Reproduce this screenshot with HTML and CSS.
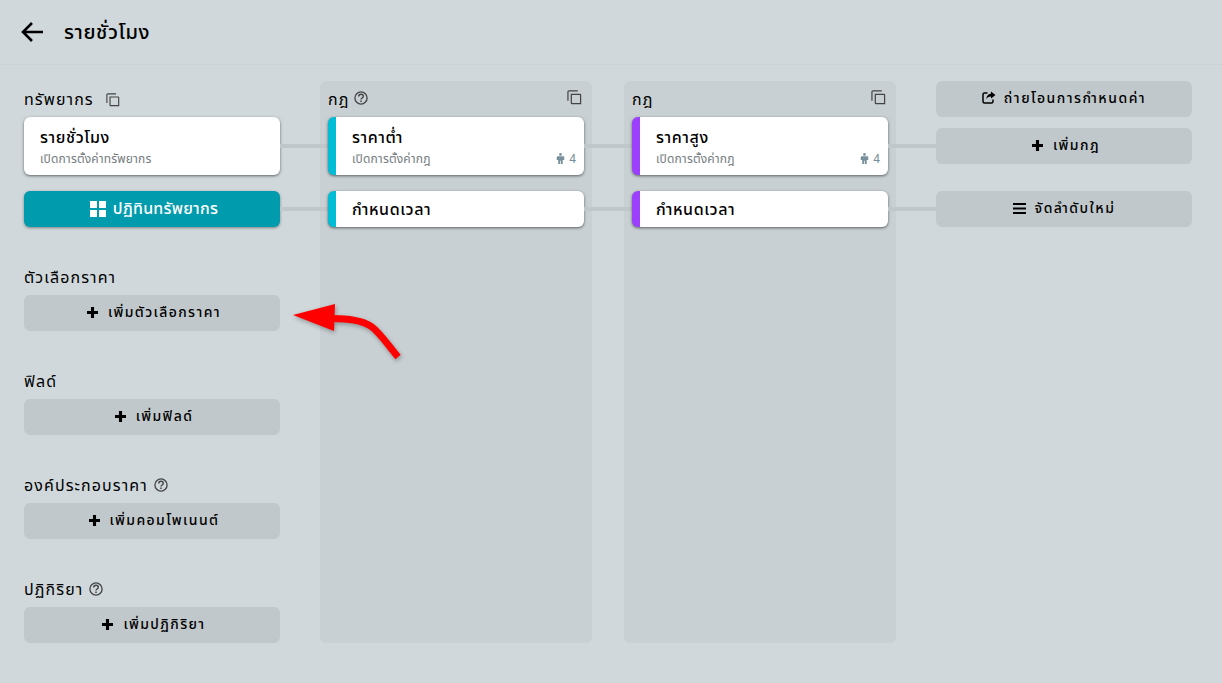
FILE: index.html
```html
<!DOCTYPE html>
<html lang="th">
<head>
<meta charset="utf-8">
<title>รายชั่วโมง</title>
<link rel="stylesheet" href="styles.css">
</head>
<body>
<svg class="defs" width="0" height="0" aria-hidden="true">
  <symbol id="copy" viewBox="0 0 16 16"><path d="M1 11.500V2.200C1 1.500 1.500 1 2.200 1h9.300M4.600 4.600h9.200c.4 0 .7.3.7.7v9.200H5.300c-.4 0-.7-.3-.7-.7z" fill="none" stroke="currentColor" stroke-width="1.300"/></symbol>
  <symbol id="help" viewBox="0 0 14 14"><circle cx="7" cy="7" r="6.100" fill="none" stroke="currentColor" stroke-width="1.300"/><path d="M4.700 5.500C4.800 4 5.800 3.300 7 3.300c1.300 0 2.300.8 2.300 2 0 1.700-2.300 1.600-2.300 3.300" fill="none" stroke="currentColor" stroke-width="1.400"/><rect x="6.250" y="9.500" width="1.500" height="1.500" fill="currentColor"/></symbol>
  <symbol id="plus" viewBox="0 0 12 12"><path d="M4.300 0h3.400v4.300H12v3.400H7.700V12H4.300V7.700H0V4.300h4.300z" fill="currentColor"/></symbol>
  <symbol id="person" viewBox="0 0 10 12"><circle cx="5" cy="1.500" r="1.500" fill="currentColor"/><path d="M2 3.400h6c.7 0 1.200.5 1.200 1.200v3H7.500V12H5.400V8.500h-.8V12H2.500V7.600H.8v-3c0-.7.5-1.200 1.200-1.200z" fill="currentColor"/></symbol>
</svg>

<header class="topbar">
  <svg class="back" viewBox="0 0 24 24" aria-hidden="true"><path d="M23 12H3M12 3l-9 9 9 9" fill="none" stroke="currentColor" stroke-width="2.600"/></svg>
  <h1>รายชั่วโมง</h1>
</header>

<main class="board">
  <section class="col">
    <div class="head"><h2>ทรัพยากร</h2><svg class="ico-copy small"><use href="#copy"/></svg></div>
    <div class="card res link">
      <div class="title">รายชั่วโมง</div>
      <div class="sub">เปิดการตั้งค่าทรัพยากร</div>
    </div>
    <button class="btn teal link">
      <svg class="grid-ico" viewBox="0 0 16 16" aria-hidden="true"><path d="M0 0h7v7H0zM9 0h7v7H9zM0 9h7v7H0zM9 9h7v7H9z" fill="currentColor"/></svg>
      ปฏิทินทรัพยากร
    </button>

    <div class="group">
      <div class="head"><h2>ตัวเลือกราคา</h2></div>
      <button class="btn"><svg class="ico-plus"><use href="#plus"/></svg>เพิ่มตัวเลือกราคา</button>
    </div>
    <div class="group">
      <div class="head"><h2>ฟิลด์</h2></div>
      <button class="btn"><svg class="ico-plus"><use href="#plus"/></svg>เพิ่มฟิลด์</button>
    </div>
    <div class="group">
      <div class="head"><h2>องค์ประกอบราคา</h2><svg class="ico-help"><use href="#help"/></svg></div>
      <button class="btn"><svg class="ico-plus"><use href="#plus"/></svg>เพิ่มคอมโพเนนต์</button>
    </div>
    <div class="group">
      <div class="head"><h2>ปฏิกิริยา</h2><svg class="ico-help"><use href="#help"/></svg></div>
      <button class="btn"><svg class="ico-plus"><use href="#plus"/></svg>เพิ่มปฏิกิริยา</button>
    </div>
  </section>

  <section class="panel">
    <div class="panel-head"><h2>กฎ</h2><svg class="ico-help"><use href="#help"/></svg><svg class="ico-copy"><use href="#copy"/></svg></div>
    <div class="card rule cyan link">
      <div class="title">ราคาต่ำ</div>
      <div class="meta"><span class="sub">เปิดการตั้งค่ากฎ</span><span class="count"><svg class="ico-person"><use href="#person"/></svg>4</span></div>
    </div>
    <div class="card rule short cyan link"><div class="title">กำหนดเวลา</div></div>
  </section>

  <section class="panel">
    <div class="panel-head"><h2>กฎ</h2><svg class="ico-copy"><use href="#copy"/></svg></div>
    <div class="card rule purple link">
      <div class="title">ราคาสูง</div>
      <div class="meta"><span class="sub">เปิดการตั้งค่ากฎ</span><span class="count"><svg class="ico-person"><use href="#person"/></svg>4</span></div>
    </div>
    <div class="card rule short purple link"><div class="title">กำหนดเวลา</div></div>
  </section>

  <section class="actions">
    <button class="btn">
      <svg class="ico-share" viewBox="0 0 14 14" aria-hidden="true"><path d="M5.500 2H2.500C1.700 2 1 2.700 1 3.500v7C1 11.300 1.700 12 2.500 12h7c.8 0 1.500-.7 1.500-1.500V8.500" fill="none" stroke="currentColor" stroke-width="1.500"/><path d="M9 .5 13.500 4 9 7.500V5.600C6.800 5.600 5.200 6.400 4.300 8.200 4.300 5.400 6 2.900 9 2.500z" fill="currentColor"/></svg>
      ถ่ายโอนการกำหนดค่า
    </button>
    <button class="btn add-rule"><svg class="ico-plus"><use href="#plus"/></svg>เพิ่มกฎ</button>
    <button class="btn reorder">
      <svg class="ico-menu" viewBox="0 0 13 11" aria-hidden="true"><path d="M0 0h13v2H0zM0 4.500h13v2H0zM0 9h13v2H0z" fill="currentColor"/></svg>
      จัดลำดับใหม่
    </button>
  </section>
</main>

<svg class="arrow" viewBox="0 0 120 60" aria-hidden="true">
  <path d="M36 15.500C52 16 68 16 79 24 87 30 95 42 105 54" fill="none" stroke="#ff0000" stroke-width="7"/>
  <path d="M0 12 42 1 41 28z" fill="#ff0000"/>
</svg>
</body>
</html>
```
FILE: styles.css
```css
* { box-sizing: border-box; }
html, body { margin: 0; height: 100%; }
body {
  background: #d0d8db;
  color: #000;
  font-family: Roboto, "Noto Sans", "Noto Sans Thai", Tahoma, "DejaVu Sans", sans-serif;
  overflow: hidden;
  position: relative;
}
.defs { position: absolute; }
h1, h2 { margin: 0; font-weight: 400; }

.topbar {
  height: 65px;
  display: flex;
  align-items: center;
  padding-left: 20px;
  border-bottom: 1px solid #c9d2d5;
}
.back { width: 24px; height: 24px; margin-right: 20px; }
.topbar h1 { font-size: 20px; font-weight: 500; letter-spacing: .6px; padding-top: 2px; }

.board {
  display: grid;
  grid-template-columns: 264px 272px 272px 264px;
  column-gap: 32px;
  padding: 16px 0 0 24px;
  align-items: start;
}

.col { display: flex; flex-direction: column; width: 256px; }
.head { height: 36px; display: flex; align-items: center; gap: 6px; }
.head h2, .panel-head h2 { font-size: 16px; letter-spacing: 1.1px; padding-top: 2px; }
.group { margin-top: 32px; display: flex; flex-direction: column; }

.card {
  position: relative;
  background: #fff;
  border-radius: 6px;
  box-shadow: 0 1px 3px rgba(0,0,0,.55);
}
.link::after {
  content: "";
  position: absolute;
  left: 100%;
  top: 50%;
  width: 48px;
  height: 4px;
  margin-top: -2px;
  background: #bfc7ca;
}
.card.res { height: 58px; padding: 9px 16px; }
.title { font-size: 16px; line-height: 24px; font-weight: 500; letter-spacing: .6px; }
.sub { font-size: 12px; line-height: 16px; color: #757c80; display: block; letter-spacing: .15px; margin-top: 1px; }

.btn {
  position: relative;
  width: 100%;
  height: 36px;
  border: 0;
  border-radius: 6px;
  background: #c0c8cb;
  color: #000;
  font: inherit;
  font-size: 14px;
  font-weight: 500;
  letter-spacing: 1.4px;
  display: flex;
  align-items: center;
  justify-content: center;
  padding: 0 0 2px;
}
.btn.teal {
  margin-top: 16px;
  padding: 0 0 0 4px;
  background: #009cad;
  color: #fff;
  box-shadow: 0 1px 3px rgba(0,0,0,.4);
  font-size: 16px;
  letter-spacing: .25px;
}
.grid-ico { width: 16px; height: 16px; margin-right: 7px; }
.ico-plus { width: 11px; height: 11px; margin-left: 4px; margin-right: 10px; }
.ico-share { width: 14px; height: 14px; margin-right: 8px; }
.ico-menu { width: 13px; height: 11px; margin-right: 9px; }
.ico-copy { width: 15px; height: 15px; color: #444; flex: none; }
.ico-copy.small { width: 14px; height: 14px; margin-top: 2px; margin-left: 6px; }
.ico-help { width: 14px; height: 14px; color: #444; flex: none; }

.panel {
  background: #c8d0d3;
  border-radius: 6px;
  height: 562px;
  padding: 0 8px;
}
.panel-head { height: 36px; display: flex; align-items: center; gap: 5px; }
.panel-head .ico-copy { margin-left: auto; margin-top: -4px; margin-right: 2px; }
.panel-head .ico-help { margin-top: -2px; }

.card.rule { border-left: 8px solid; padding: 9px 16px; height: 58px; }
.card.rule.cyan { border-color: #00bcd4; }
.card.rule.purple { border-color: #9c3fff; }
.card.rule.short { height: 36px; margin-top: 16px; padding: 7px 16px; }
.meta { display: flex; justify-content: space-between; align-items: center; margin-right: -8px; }
.count { font-size: 12px; color: #78909c; display: flex; align-items: center; gap: 4px; }
.ico-person { width: 9px; height: 11px; color: #78909c; }

.actions { display: flex; flex-direction: column; width: 256px; justify-self: end; }
.actions .btn { letter-spacing: 1.5px; }
.add-rule { margin-top: 11px; }
.reorder { margin-top: 27px; }
.add-rule::before, .reorder::before {
  content: "";
  position: absolute;
  right: 100%;
  top: 16px;
  width: 48px;
  height: 4px;
  background: #bfc7ca;
}

.arrow {
  position: absolute;
  left: 293px;
  top: 303px;
  width: 120px;
  height: 60px;
  filter: drop-shadow(1px 2px 2px rgba(0,0,0,.3));
}
```
